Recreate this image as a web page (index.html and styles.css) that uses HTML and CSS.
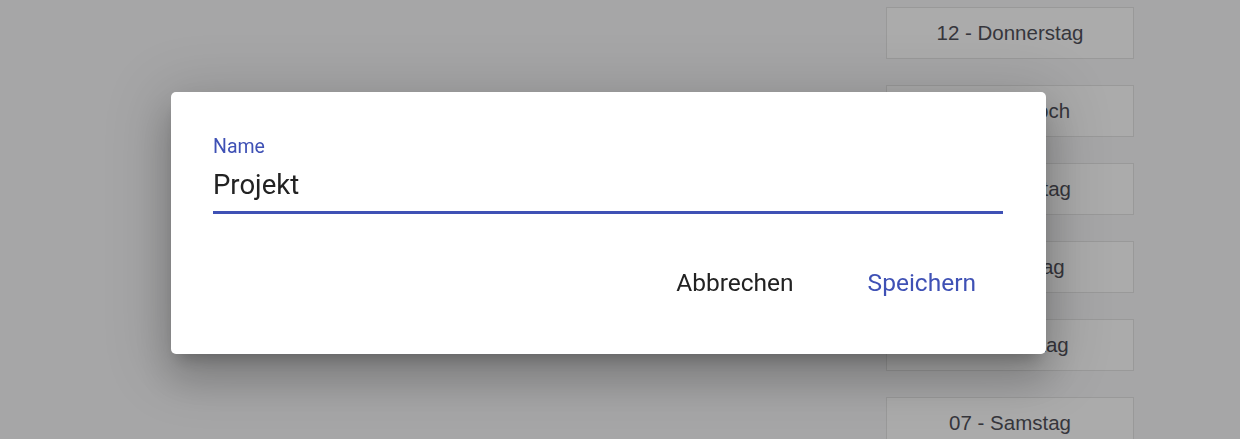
FILE: index.html
```html
<!DOCTYPE html>
<html>

<head>
  <meta charset="UTF-8">
  <title>Tage</title>
  <link rel="stylesheet" href="styles.css">
</head>

<body>
  <div class="page">
    <div class="days">
      <button class="day">12 - Donnerstag</button>
      <button class="day">11 - Mittwoch</button>
      <button class="day">10 - Dienstag</button>
      <button class="day">09 - Montag</button>
      <button class="day">08 - Sonntag</button>
      <button class="day">07 - Samstag</button>
    </div>
  </div>

  <div class="overlay">
    <div class="dialog">
      <label class="field">
        <span class="label">Name</span>
        <span class="input">Projekt</span>
      </label>
      <div class="actions">
        <button class="btn">Abbrechen</button>
        <button class="btn primary">Speichern</button>
      </div>
    </div>
  </div>
</body>

</html>
```

FILE: styles.css
```css
html,
body {
  margin: 0;
  height: 100%;
  overflow: hidden;
  background: #a6a6a7;
}

.page {
  display: flex;
  justify-content: flex-end;
  padding: 7px 106px 0 0;
}

.days {
  display: flex;
  flex-direction: column;
  gap: 26px;
}

.day {
  width: 248px;
  height: 52px;
  background: #ababab;
  border: 1px solid #999;
  font-family: 'Liberation Sans', Arial, sans-serif;
  font-size: 20.5px;
  color: #36363c;
  padding: 0;
}

.overlay {
  position: fixed;
  top: 0;
  left: 0;
  right: 0;
  bottom: 0;
  padding: 92px 0 0 171px;
}

.dialog {
  width: 875px;
  height: 262px;
  box-sizing: border-box;
  background: #fff;
  border-radius: 5px;
  padding: 43px 43px 0 42px;
  font-family: Roboto, 'Noto Sans', sans-serif;
  box-shadow: 0 11px 15px -7px rgba(0, 0, 0, .22),
    0 24px 38px 3px rgba(0, 0, 0, .16),
    0 9px 60px 12px rgba(0, 0, 0, .14);
}

.field {
  display: flex;
  flex-direction: column;
  border-bottom: 3px solid #3f51b5;
}

.label {
  font-size: 19.5px;
  line-height: 24px;
  color: #3f51b5;
}

.input {
  font-size: 27.5px;
  line-height: 34px;
  padding: 9px 0 9px;
  color: #222;
}

.actions {
  display: flex;
  justify-content: flex-end;
  gap: 19px;
  margin-top: 40px;
}

.btn {
  font-family: Roboto, 'Noto Sans', sans-serif;
  font-size: 24.5px;
  height: 56px;
  padding: 0 28px;
  margin-right: -1px;
  background: none;
  border: none;
  color: #222;
}

.btn.primary {
  color: #3f51b5;
}
```
